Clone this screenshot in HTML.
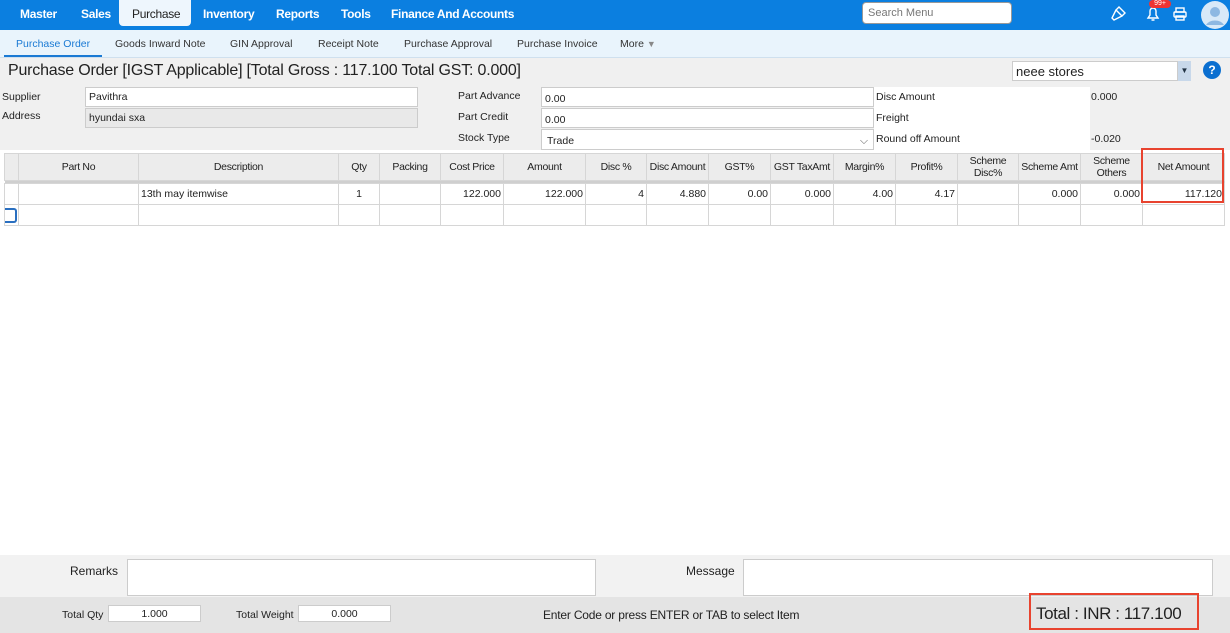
<!DOCTYPE html>
<html><head><meta charset="utf-8"><style>
*{box-sizing:border-box;margin:0;padding:0}
body{width:1230px;height:633px;overflow:hidden;font-family:"Liberation Sans",sans-serif;background:#fff;position:relative;color:#222}
.a{position:absolute}
.nav{left:0;top:0;width:1230px;height:30px;background:#0b7fe0}
.nav span{position:absolute;top:7px;color:#fff;font-size:12px;font-weight:bold;letter-spacing:-0.3px}
.sub{left:0;top:30px;width:1230px;height:28px;background:#e9f4fc;border-bottom:1px solid #cfe0ee}
.sub span{position:absolute;top:8px;font-size:10.5px;color:#333}
.lbl{font-size:10.5px;color:#222}
.inp{background:#fff;border:1px solid #ccc;font-size:10.5px;padding:3px 0 0 3px}
table{border-collapse:collapse;position:absolute;left:4px;top:153px;font-size:10.5px;table-layout:fixed;width:1220px}
td,th{border:1px solid #d6d6d6;padding:0 2px;height:21px;white-space:nowrap;overflow:hidden}
th{background:#ececec;font-weight:normal;height:27px;line-height:12px;color:#222;letter-spacing:-0.3px}
td{text-align:right}
.stripe td{height:3px;background:#cfcfcf;border:none;padding:0}
</style></head><body>
<div class="a nav">
<span style="left:20px">Master</span><span style="left:81px">Sales</span>
<div class="a" style="left:119px;top:0;width:72px;height:26px;background:#eef6fd;border-radius:0 0 4px 4px"></div>
<span style="left:132px;color:#222;font-weight:normal">Purchase</span>
<span style="left:203px">Inventory</span><span style="left:276px">Reports</span><span style="left:341px">Tools</span><span style="left:391px">Finance And Accounts</span>
<div class="a" style="left:862px;top:2px;width:150px;height:22px;background:#fff;border-radius:4px;border:1px solid #999;font-size:11px;color:#777;padding:4px 5px">Search Menu</div>
<svg class="a" style="left:1110px;top:4px" width="18" height="18" viewBox="0 0 18 18" fill="none" stroke="#fff" stroke-width="1.4"><path d="M9 3l6 6-3 3-6-6z M6 6l-4 8 2 2 8-4"/></svg>
<svg class="a" style="left:1144px;top:4px" width="18" height="18" viewBox="0 0 18 18" fill="none" stroke="#fff" stroke-width="1.4"><path d="M4 14h10l-2-3V7a3 3 0 0 0-6 0v4z M7.5 16h3"/></svg>
<div class="a" style="left:1149px;top:0;width:22px;height:8px;background:#e33;border-radius:4px;color:#fff;font-size:7px;line-height:8px;text-align:center">99+</div>
<svg class="a" style="left:1172px;top:6px" width="16" height="16" viewBox="0 0 16 16" fill="none" stroke="#fff" stroke-width="1.4"><rect x="4" y="2" width="8" height="4"/><rect x="2" y="6" width="12" height="5" rx="1"/><rect x="4" y="10" width="8" height="4"/></svg>
<svg class="a" style="left:1201px;top:1px" width="28" height="28" viewBox="0 0 28 28"><circle cx="14" cy="14" r="14" fill="#d8e9f8"/><circle cx="14" cy="11" r="5" fill="#8db8e2"/><path d="M5 24a10 8 0 0 1 18 0z" fill="#8db8e2"/></svg>
</div>
<div class="a sub">
<span style="left:16px;color:#1a7ad4">Purchase Order</span>
<div class="a" style="left:4px;top:25px;width:98px;height:2px;background:#1a7ad4"></div>
<span style="left:115px">Goods Inward Note</span><span style="left:230px">GIN Approval</span><span style="left:318px">Receipt Note</span><span style="left:404px">Purchase Approval</span><span style="left:517px">Purchase Invoice</span><span style="left:620px">More <span style="position:static;color:#888;font-size:9px">▼</span></span>
</div>
<div class="a" style="left:0;top:58px;width:1230px;height:92px;background:#f0f0f0"></div>
<div class="a" style="left:8px;top:62px;font-size:16px;color:#222;letter-spacing:-0.2px">Purchase Order [IGST Applicable] [Total Gross : 117.100 Total GST: 0.000]</div>
<div class="a inp" style="left:1012px;top:61px;width:166px;height:20px;font-size:13px;padding:2px 3px">neee stores</div>
<div class="a" style="left:1178px;top:61px;width:13px;height:20px;background:#c8d8ea;font-size:8px;text-align:center;line-height:20px;color:#234">▼</div>
<div class="a" style="left:1203px;top:61px;width:18px;height:18px;border-radius:50%;background:#0b6fd0;color:#fff;font-weight:bold;font-size:12px;text-align:center;line-height:18px">?</div>
<div class="a lbl" style="left:2px;top:91px">Supplier</div>
<div class="a lbl" style="left:2px;top:110px">Address</div>
<div class="a inp" style="left:85px;top:87px;width:333px;height:20px">Pavithra</div>
<div class="a inp" style="left:85px;top:108px;width:333px;height:20px;background:#e9e9e9">hyundai sxa</div>
<div class="a lbl" style="left:458px;top:90px">Part Advance</div>
<div class="a lbl" style="left:458px;top:111px">Part Credit</div>
<div class="a lbl" style="left:458px;top:132px">Stock Type</div>
<div class="a inp" style="left:541px;top:87px;width:333px;height:20px;padding-top:5px">0.00</div>
<div class="a inp" style="left:541px;top:108px;width:333px;height:20px;padding-top:5px">0.00</div>
<div class="a inp" style="left:541px;top:129px;width:333px;height:21px;padding:5px 5px 0">Trade<span style="float:right;color:#666">⌵</span></div>
<div class="a" style="left:874px;top:87px;width:216px;height:63px;background:#fff"></div>
<div class="a lbl" style="left:876px;top:91px">Disc Amount</div>
<div class="a lbl" style="left:876px;top:112px">Freight</div>
<div class="a lbl" style="left:876px;top:133px">Round off Amount</div>
<div class="a lbl" style="left:1091px;top:91px">0.000</div>
<div class="a lbl" style="left:1091px;top:133px">-0.020</div>
<table>
<colgroup><col style="width:14px"><col style="width:120px"><col style="width:200px"><col style="width:41px"><col style="width:61px"><col style="width:63px"><col style="width:82px"><col style="width:61px"><col style="width:62px"><col style="width:62px"><col style="width:63px"><col style="width:62px"><col style="width:62px"><col style="width:61px"><col style="width:62px"><col style="width:62px"><col style="width:82px"></colgroup>
<tr><th></th><th>Part No</th><th>Description</th><th>Qty</th><th>Packing</th><th>Cost Price</th><th>Amount</th><th>Disc %</th><th>Disc Amount</th><th>GST%</th><th>GST TaxAmt</th><th>Margin%</th><th>Profit%</th><th>Scheme<br>Disc%</th><th>Scheme Amt</th><th>Scheme<br>Others</th><th>Net Amount</th></tr>
<tr class="stripe"><td colspan="17"></td></tr>
<tr><td></td><td></td><td style="text-align:left">13th may itemwise</td><td style="text-align:center">1</td><td></td><td>122.000</td><td>122.000</td><td>4</td><td>4.880</td><td>0.00</td><td>0.000</td><td>4.00</td><td>4.17</td><td></td><td>0.000</td><td>0.000</td><td>117.120</td></tr>
<tr><td style="padding:0"><div style="width:12px;height:15px;border:2px solid #2a6fc0;border-left:none;border-radius:0 3px 3px 0"></div></td><td></td><td></td><td></td><td></td><td></td><td></td><td></td><td></td><td></td><td></td><td></td><td></td><td></td><td></td><td></td><td></td></tr>
</table>
<div class="a" style="left:1141px;top:148px;width:83px;height:55px;border:2px solid #e8432f"></div>
<div class="a" style="left:0;top:555px;width:1230px;height:42px;background:#f2f2f2"></div>
<div class="a" style="left:0;top:597px;width:1230px;height:36px;background:#e4e4e4"></div>
<div class="a" style="left:70px;top:564px;font-size:12px">Remarks</div>
<div class="a inp" style="left:127px;top:559px;width:469px;height:37px"></div>
<div class="a" style="left:686px;top:564px;font-size:12px">Message</div>
<div class="a inp" style="left:743px;top:559px;width:470px;height:37px"></div>
<div class="a lbl" style="left:62px;top:609px">Total Qty</div>
<div class="a inp" style="left:108px;top:605px;width:93px;height:17px;text-align:center;padding:2px 0">1.000</div>
<div class="a lbl" style="left:236px;top:609px">Total Weight</div>
<div class="a inp" style="left:298px;top:605px;width:93px;height:17px;text-align:center;padding:2px 0">0.000</div>
<div class="a" style="left:543px;top:608px;font-size:12px;letter-spacing:-0.2px">Enter Code or press ENTER or TAB to select Item</div>
<div class="a" style="left:1029px;top:593px;width:170px;height:37px;border:2px solid #e8432f;font-size:17px;padding:9px 0 0 5px;white-space:nowrap;letter-spacing:-0.4px">Total : INR : 117.100</div>
</body></html>
